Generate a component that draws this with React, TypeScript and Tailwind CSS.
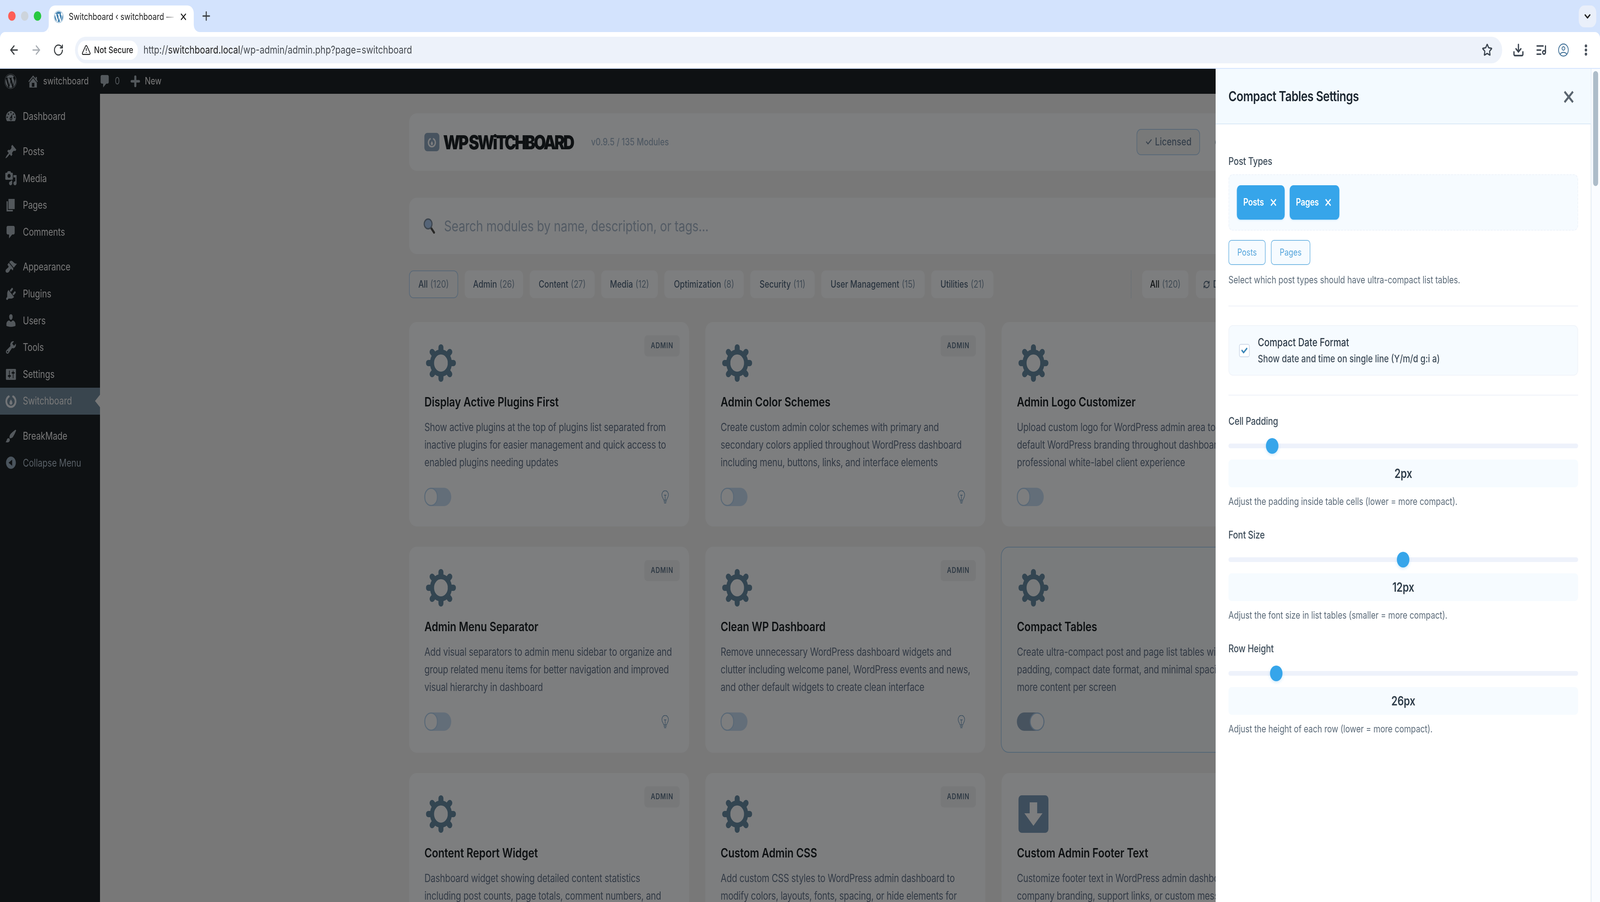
import React from "react";
import { ArrowLeft, ArrowRight, RotateCw, Star, Download, ListMusic, EllipsisVertical, ChevronDown, X, Plus, TriangleAlert, RefreshCw } from "lucide-react";
import { FaWordpress, FaCheck } from "react-icons/fa";

const DASH: Record<string, string> = {
  dashboard: "M3.76 16h12.48c1.1-1.37 1.76-3.11 1.76-5 0-4.42-3.58-8-8-8s-8 3.58-8 8c0 1.89.66 3.63 1.76 5zM10 4c.55 0 1 .45 1 1s-.45 1-1 1-1-.45-1-1 .45-1 1-1zM6 6c.55 0 1 .45 1 1s-.45 1-1 1-1-.45-1-1 .45-1 1-1zm8 0c.55 0 1 .45 1 1s-.45 1-1 1-1-.45-1-1 .45-1 1-1zm-5.37 5.55L12 7v6c0 1.1-.9 2-2 2s-2-.9-2-2c0-.57.24-1.08.63-1.45zM4 10c.55 0 1 .45 1 1s-.45 1-1 1-1-.45-1-1 .45-1 1-1zm12 0c.55 0 1 .45 1 1s-.45 1-1 1-1-.45-1-1 .45-1 1-1zm-5 3c0-.55-.45-1-1-1s-1 .45-1 1 .45 1 1 1 1-.45 1-1z",
  post: "M10.44 3.02l1.82-1.82 6.36 6.35-1.83 1.82c-1.05-.68-2.48-.57-3.41.36l-.75.75c-.92.93-1.04 2.35-.35 3.41l-1.83 1.82-2.41-2.41-2.8 2.79c-.42.42-3.38 2.71-3.8 2.29s1.86-3.39 2.28-3.81l2.79-2.79L4.1 9.36l1.83-1.82c1.05.69 2.48.57 3.4-.36l.75-.75c.93-.92 1.05-2.35.36-3.41z",
  media: "M13 11V4c0-.55-.45-1-1-1h-1.67L9 1H5L3.67 3H2c-.55 0-1 .45-1 1v7c0 .55.45 1 1 1h10c.55 0 1-.45 1-1zM7 4.5c1.38 0 2.5 1.12 2.5 2.5S8.38 9.5 7 9.5 4.5 8.38 4.5 7 5.62 4.5 7 4.5zM14 6h5v10.5c0 1.38-1.12 2.5-2.5 2.5S14 17.88 14 16.5s1.12-2.5 2.5-2.5c.17 0 .34.02.5.05V9h-3V6zm-4 8.05V13h2v3.5c0 1.38-1.12 2.5-2.5 2.5S7 17.88 7 16.5 8.12 14 9.5 14c.17 0 .34.02.5.05z",
  page: "M6 15V2h10v13H6zm-1 1h8v2H3V5h2v11z",
  comments: "M5 2h9c1.1 0 2 .9 2 2v7c0 1.1-.9 2-2 2h-2l-5 5v-5H5c-1.1 0-2-.9-2-2V4c0-1.1.9-2 2-2z",
  appearance: "M14.48 11.06L7.41 3.99l1.5-1.5c.5-.56 2.3-.47 3.51.32 1.21.8 1.43 1.28 2.91 2.1 1.18.64 2.45 1.26 4.45.85zm-.71.71L6.7 4.7 4.93 6.47c-.39.39-.39 1.02 0 1.41l1.06 1.06c.39.39.39 1.03 0 1.42-.6.6-1.43 1.11-2.21 1.69-.35.26-.7.53-1.01.84C1.43 13.23.93 15.6 2.09 16.76c1.17 1.17 3.53.67 4.87-.67.31-.31.58-.66.84-1.02.57-.78 1.08-1.61 1.69-2.21.39-.39 1.02-.39 1.41 0l1.06 1.06c.39.39 1.02.39 1.41 0z",
  plugin: "M13.11 4.36L9.87 7.6 8 5.73l3.24-3.24c.35-.34 1.05-.2 1.56.32.52.51.66 1.21.31 1.55zm-8 1.77l.91-1.12 9.01 9.01-1.19.84c-.71.71-2.63 1.16-3.82 1.16H6.14L4.9 17.26c-.59.59-1.54.59-2.12 0-.59-.58-.59-1.53 0-2.12l1.24-1.24v-3.88c0-1.13.4-3.19 1.09-3.89zm7.26 3.97l3.24-3.24c.34-.35 1.04-.21 1.55.31.52.51.66 1.21.31 1.55l-3.24 3.25z",
  users: "M10 9.25c-2.27 0-2.73-3.44-2.73-3.44C7 4.02 7.82 2 9.97 2c2.16 0 2.98 2.02 2.71 3.81 0 0-.41 3.44-2.68 3.44zm0 2.57L12.72 10c2.39 0 4.52 2.33 4.52 4.53v2.49s-3.65 1.13-7.24 1.13c-3.65 0-7.24-1.13-7.24-1.13v-2.49c0-2.25 1.94-4.48 4.47-4.48z",
  tools: "M16.68 9.77c-1.34 1.34-3.3 1.67-4.95.99l-5.41 6.52c-.99.99-2.59.99-3.58 0s-.99-2.59 0-3.57l6.52-5.42c-.68-1.65-.35-3.61.99-4.95 1.28-1.28 3.12-1.62 4.72-1.06l-2.89 2.89 2.82 2.82 2.86-2.87c.53 1.58.18 3.39-1.08 4.65zM3.81 16.21c.4.39 1.04.39 1.43 0 .4-.4.4-1.04 0-1.43-.39-.4-1.03-.4-1.43 0-.39.39-.39 1.03 0 1.43z",
  settings: "M18 16V4c0-.55-.45-1-1-1H3c-.55 0-1 .45-1 1v12c0 .55.45 1 1 1h14c.55 0 1-.45 1-1zM8 11h1c.55 0 1 .45 1 1s-.45 1-1 1H8v1.5c0 .28-.22.5-.5.5s-.5-.22-.5-.5V13H6c-.55 0-1-.45-1-1s.45-1 1-1h1V5.5c0-.28.22-.5.5-.5s.5.22.5.5V11zm5-2h-1c-.55 0-1-.45-1-1s.45-1 1-1h1V5.5c0-.28.22-.5.5-.5s.5.22.5.5V7h1c.55 0 1 .45 1 1s-.45 1-1 1h-1v5.5c0 .28-.22.5-.5.5s-.5-.22-.5-.5V9z",
  brush: "M18.33 3.57s.27-.8-.31-1.36c-.53-.52-1.22-.24-1.22-.24-.61.3-5.76 3.47-7.67 5.57-.86.96-2.06 3.79-1.09 4.82.92.98 3.96-.17 4.79-1 2.06-2.06 5.21-7.84 5.5-8.79zM1.4 17.65c2.37-1.56 1.46-3.41 3.23-4.64.93-.65 2.22-.62 3.08.29.63.67.8 2.57-.16 3.46-1.57 1.45-4 1.55-6.15.89z",
  collapse: "M10 2.16c4.33 0 7.84 3.51 7.84 7.84s-3.51 7.84-7.84 7.84S2.16 14.33 2.16 10 5.71 2.16 10 2.16zm2 11.72V6.12L6.18 9.97z",
  home: "M16 8.5l1.53 1.53-1.06 1.06L10 4.62l-6.47 6.47-1.06-1.06L10 2.5l4 4v-2h2v4zm-6-2.46l6 5.99V18H4v-5.97zM12 17v-5H8v5h4z",
};

function Dash({ name, className }: { name: string; className: string }) {
  return (
    <svg viewBox="0 0 20 20" className={className} fill="currentColor">
      <path d={DASH[name]} />
    </svg>
  );
}

function SwitchMark({ className, ring = "currentColor" }: { className: string; ring?: string }) {
  return (
    <svg viewBox="0 0 40 40" className={className} fill="none">
      <path d="M13 8.5A14 14 0 0 0 20 35a14 14 0 0 0 7-26.5" stroke={ring} strokeWidth="5.5" strokeLinecap="round" />
      <path d="M20 16c3 4 4.5 6 4.5 9a4.5 4.5 0 0 1-9 0c0-3 1.5-5 4.5-9z" fill={ring} />
    </svg>
  );
}

function Gear() {
  const angles = [0, 45, 90, 135, 180, 225, 270, 315];
  return (
    <svg viewBox="0 0 96 96" className="h-[96px] w-[96px] text-[#668aa2]" fill="none" stroke="currentColor">
      <circle cx="48" cy="48" r="28.5" strokeWidth="13" />
      {angles.map((a) => (
        <line key={a} x1="48" y1="18" x2="48" y2="8" strokeWidth="16" strokeLinecap="round" transform={`rotate(${a} 48 48)`} />
      ))}
    </svg>
  );
}

function DownloadBox() {
  return (
    <svg viewBox="0 0 96 96" className="h-[96px] w-[96px]">
      <rect width="96" height="96" rx="10" fill="#7b9ab8" />
      <path d="M36 18h24v28h17L48 78 19 46h17z" fill="#fbfcfe" />
    </svg>
  );
}

function Bulb() {
  return (
    <svg viewBox="0 0 25 34" className="h-[34px] w-[25px]" fill="none" stroke="#7ea4c4" strokeWidth="1.8" strokeLinecap="round" strokeLinejoin="round">
      <path d="M8 25c0-4-6-7-6-14a10.500 10.500 0 0 1 21 0c0 7-6 10-6 14z" />
      <path d="M9.500 12h6M12.500 12v13M8.500 28.500h8M10 32h5" />
    </svg>
  );
}

type CardData = { title: string; lines: string[]; icon?: "gear" | "download"; on?: boolean; active?: boolean };

function Toggle({ on }: { on?: boolean }) {
  return on ? (
    <div className="flex h-[47px] w-[88px] justify-end rounded-full bg-[#8ea6bf]">
      <div className="h-[47px] w-[47px] rounded-full border-[3px] border-[#a9c8e6] bg-[#fbfcfe]" />
    </div>
  ) : (
    <div className="flex h-[47px] w-[86px] justify-start rounded-full bg-[#c6dcf2]">
      <div className="h-[47px] w-[43px] rounded-full border-[3px] border-[#b5d2ee] bg-[#fbfcfe]" />
    </div>
  );
}

function Card({ title, lines, icon = "gear", on, active, h, col }: CardData & { h: string; col: number }) {
  return (
    <div className={`relative flex flex-col rounded-[24px] pr-[64px] ${h} ${active ? "-ml-[2px] border-2 border-[#a6cdec] bg-[#f3f6f8] pl-[49px] pt-[55px]" : "bg-[#fbfcfe] pl-[49px] pt-[57px]"}`}>
      <div className="ml-[5px] h-[96px] w-[96px]">{icon === "gear" ? <Gear /> : <DownloadBox />}</div>
      <div className="mt-[29px] whitespace-nowrap text-[33px] font-semibold leading-[44px] tracking-[-0.003em] text-[#1d2327]">{title}</div>
      <div className="mt-[21px] text-[28px] leading-[45px] tracking-[-0.0115em] text-[#64748b]">
        {lines.map((l) => (
          <div key={l} className="whitespace-nowrap">{l}</div>
        ))}
      </div>
      <div className="mt-[42px] flex items-center justify-between">
        <Toggle on={on} />
        <Bulb />
      </div>
      {col < 2 && (
        <div className="absolute right-[30px] top-[34px] flex h-[54px] w-[113px] items-center justify-center rounded-[10px] bg-[#eef0f2] text-[19.500px] font-semibold tracking-[0.06em] text-[#5d7388]">ADMIN</div>
      )}
    </div>
  );
}

const rows: CardData[][] = [
  [
    { title: "Display Active Plugins First", lines: ["Show active plugins at the top of plugins list separated from", "inactive plugins for easier management and quick access to", "enabled plugins needing updates"] },
    { title: "Admin Color Schemes", lines: ["Create custom admin color schemes with primary and", "secondary colors applied throughout WordPress dashboard", "including menu, buttons, links, and interface elements"] },
    { title: "Admin Logo Customizer", lines: ["Upload custom logo for WordPress admin area to", "default WordPress branding throughout dashboard", "professional white-label client experience"] },
  ],
  [
    { title: "Admin Menu Separator", lines: ["Add visual separators to admin menu sidebar to organize and", "group related menu items for better navigation and improved", "visual hierarchy in dashboard"] },
    { title: "Clean WP Dashboard", lines: ["Remove unnecessary WordPress dashboard widgets and", "clutter including welcome panel, WordPress events and news,", "and other default widgets to create clean interface"] },
    { title: "Compact Tables", on: true, active: true, lines: ["Create ultra-compact post and page list tables with", "padding, compact date format, and minimal spacing", "more content per screen"] },
  ],
  [
    { title: "Content Report Widget", lines: ["Dashboard widget showing detailed content statistics", "including post counts, page totals, comment numbers, and"] },
    { title: "Custom Admin CSS", lines: ["Add custom CSS styles to WordPress admin dashboard to", "modify colors, layouts, fonts, spacing, or hide elements for"] },
    { title: "Custom Admin Footer Text", icon: "download", lines: ["Customize footer text in WordPress admin dashboard", "company branding, support links, or custom messages"] },
  ],
];

const navGroups: { label: string; icon: string; active?: boolean; dim?: boolean }[][] = [
  [{ label: "Dashboard", icon: "dashboard" }],
  [
    { label: "Posts", icon: "post" },
    { label: "Media", icon: "media" },
    { label: "Pages", icon: "page" },
    { label: "Comments", icon: "comments" },
  ],
  [
    { label: "Appearance", icon: "appearance" },
    { label: "Plugins", icon: "plugin" },
    { label: "Users", icon: "users" },
    { label: "Tools", icon: "tools" },
    { label: "Settings", icon: "settings" },
    { label: "Switchboard", icon: "switch", active: true },
  ],
  [
    { label: "BreakMade", icon: "brush" },
    { label: "Collapse Menu", icon: "collapse", dim: true },
  ],
];

function Sidebar() {
  return (
    <div className="flex w-[320px] shrink-0 flex-col gap-[21px] bg-[#1d2327] pt-[24px] text-[26.500px] text-[#f0f0f1]">
      {navGroups.map((g, i) => (
        <div key={i}>
          {g.map((it) => (
            <div key={it.label} className={`relative flex h-[68.600px] items-center gap-[18px] pl-[15px] ${it.active ? "bg-[#728a9d]" : ""} ${it.dim ? "text-[#aebdca]" : ""}`}>
              {it.icon === "switch" ? (
                <SwitchMark className="h-[40px] w-[40px] text-[#e4e9ee]" />
              ) : (
                <Dash name={it.icon} className={`h-[40px] w-[40px] ${it.dim ? "text-[#94a9bb]" : "text-[#a7b0b8]"}`} />
              )}
              <span>{it.label}</span>
              {it.active && <div className="absolute right-0 top-[18px] h-0 w-0 border-y-[16px] border-r-[16px] border-y-transparent border-r-[#f0f0f1]" />}
            </div>
          ))}
        </div>
      ))}
    </div>
  );
}

function AdminBar() {
  return (
    <div className="flex h-[64px] shrink-0 items-center bg-[#1d2327] pl-[14px] text-[25px] text-[#f0f0f1]">
      <FaWordpress className="h-[40px] w-[40px] text-[#a7b0b8]" />
      <Dash name="home" className="ml-[32px] h-[40px] w-[40px] text-[#a7b0b8]" />
      <span className="ml-[12px]">switchboard</span>
      <Dash name="comments" className="ml-[32px] h-[40px] w-[40px] text-[#a7b0b8]" />
      <span className="ml-[12px] text-[#a7b0b8]">0</span>
      <Plus className="ml-[30px] h-[40px] w-[40px] text-[#a7b0b8]" strokeWidth={4} />
      <span className="ml-[10px]">New</span>
    </div>
  );
}

function FilterPill({ name, count, w, active, strong }: { name: string; count: string; w: string; active?: boolean; strong?: boolean }) {
  return (
    <div className={`flex h-[71px] items-center justify-center gap-[8px] whitespace-nowrap rounded-[14px] text-[25px] font-medium ${w} ${active ? "border-2 border-[#b0d0ee] bg-[#f4f6f8]" : "bg-[#fbfcfe]"} ${strong ? "text-[#1d2327]" : "text-[#53687e]"}`}>
      <span>{name}</span>
      <span className="font-normal text-[#8095a9]">{count}</span>
    </div>
  );
}

function Main() {
  return (
    <div className="w-[4800px] pl-[989px] pt-[50px]">
      <div className="w-[3740px]">
        <div className="flex h-[147px] items-center rounded-[24px] bg-[#fbfcfe] pl-[49px] pr-[1040px]">
          <div className="flex h-[47px] w-[48px] items-center justify-center rounded-[9px] bg-[#8ea6be]">
            <SwitchMark className="h-[30px] w-[30px] text-[#fbfcfe]" />
          </div>
          <span className="ml-[12px] whitespace-nowrap text-[50px] font-black leading-none tracking-[-0.1em] text-[#1d2327]">WP SWiTCHBOARD</span>
          <span className="ml-[58px] whitespace-nowrap text-[25px] font-medium text-[#9fb2c7]">v0.9.5 / 135 Modules</span>
          <div className="ml-auto flex h-[67px] w-[203px] items-center justify-center gap-[8px] rounded-[14px] border-2 border-[#b0d0ee] bg-[#f0f2f3] text-[27px] font-medium text-[#6c8097]">
            <span>✓</span>
            <span>Licensed</span>
          </div>
          <div className="ml-[18px] flex h-[67px] w-[151px] items-center rounded-[14px] bg-[#fbfcfe] pl-[27px]">
            <svg viewBox="0 0 96 96" className="h-[30px] w-[30px] text-[#5e7a92]" fill="none" stroke="currentColor"><circle cx="48" cy="48" r="28" strokeWidth="18" /></svg>
          </div>
        </div>
        <div className="mt-[69px] flex h-[144px] items-center rounded-[24px] bg-[#fbfcfe] pl-[44px]">
          <svg viewBox="0 0 42 40" className="h-[40px] w-[42px]">
            <path d="M27 26l9 11" stroke="#50504f" strokeWidth="6" strokeLinecap="round" />
            <circle cx="17" cy="15" r="12.500" fill="#aac9ee" stroke="#7a8b9c" strokeWidth="3.500" />
          </svg>
          <span className="ml-[26px] text-[38px] font-normal tracking-[-0.006em] text-[#a6b6c9]">Search modules by name, description, or tags...</span>
        </div>
        <div className="mt-[42px] flex h-[71px] items-center gap-[21px]">
          <FilterPill name="All" count="(120)" w="w-[157px]" active />
          <FilterPill name="Admin" count="(26)" w="w-[187px]" />
          <FilterPill name="Content" count="(27)" w="w-[208px]" />
          <FilterPill name="Media" count="(12)" w="w-[181px]" />
          <FilterPill name="Optimization" count="(8)" w="w-[254px]" />
          <FilterPill name="Security" count="(11)" w="w-[206px]" />
          <FilterPill name="User Management" count="(15)" w="w-[331px]" />
          <FilterPill name="Utilities" count="(21)" w="w-[199px]" />
          <div className="ml-[419px] flex h-[71px] items-center gap-[24px] border-l border-dotted border-[#9dc0e0] pl-[35px]">
            <FilterPill name="All" count="(120)" w="w-[148px]" strong />
            <div className="flex h-[71px] w-[230px] items-center gap-[10px] rounded-[14px] bg-[#fbfcfe] pl-[23px] text-[25px] font-medium text-[#53687e]">
              <RefreshCw className="h-[22px] w-[22px]" strokeWidth={2.500} />
              <span>D</span>
            </div>
          </div>
        </div>
        <div className="mt-[61px] grid grid-cols-[896px_896px_896px_896px] gap-[52px]">
          {rows.map((r, ri) => (
            <React.Fragment key={ri}>
              {r.map((c, ci) => (
                <Card key={c.title} {...c} col={ci} h={ri === 1 ? "h-[527px]" : "h-[523px]"} />
              ))}
              <div />
            </React.Fragment>
          ))}
        </div>
      </div>
    </div>
  );
}

function SliderBlock({ label, value, help, thumb, first }: { label: string; value: string; help: string; thumb: number; first?: boolean }) {
  return (
    <div className={first ? "mt-[48px]" : "mt-[50px]"}>
      <div className="text-[27px] font-medium leading-[36px] tracking-[-0.01em] text-[#3f4e5b]">{label}</div>
      <div className="relative mt-[25px] flex h-[40px] items-center">
        <div className="h-[12px] w-full rounded-full bg-[#eef2fb]" />
        <div className="absolute top-0 h-[40px] w-[40px] rounded-full bg-[#36a5ea] shadow-[0_3px_8px_rgba(54,165,234,0.25)]" style={{ left: thumb }} />
      </div>
      <div className="mt-[15px] flex h-[71px] items-center justify-center rounded-[10px] bg-[#f6fbff] text-[32px] font-semibold tracking-[-0.01em] text-[#2f3d4a]">{value}</div>
      <div className="mt-[18px] text-[25.500px] leading-[36px] tracking-[-0.004em] text-[#5f6e7c]">{help}</div>
    </div>
  );
}

function Panel() {
  return (
    <div className="absolute bottom-0 right-0 top-0 z-20 flex w-[1230px]">
      <div className="flex w-[1201px] flex-col bg-white">
        <div className="flex h-[142px] shrink-0 items-center justify-between border-b-2 border-[#d9e8f6] bg-[#f3faff] pl-[41px] pr-[44px]">
          <span className="text-[36px] font-semibold tracking-[-0.02em] text-[#1d2731]">Compact Tables Settings</span>
          <X className="mt-[4px] h-[54px] w-[54px] text-[#5a6570]" strokeWidth={2.600} strokeLinecap="butt" />
        </div>
        <div className="flex-1 px-[41px] pt-[77px]">
          <div className="text-[27px] font-medium leading-[36px] tracking-[-0.01em] text-[#3f4e5b]">Post Types</div>
          <div className="mt-[15px] flex h-[144px] items-center gap-[16px] rounded-[14px] border-2 border-dashed border-[#eef3fa] bg-[#f6fbff] pl-[25px]">
            {[["Posts", "w-[153px]"], ["Pages", "w-[159px]"]].map(([t, w]) => (
              <div key={t} className={`flex h-[88px] items-center justify-center gap-[14px] rounded-[12px] bg-[#36a5ea] text-[25px] font-semibold tracking-[-0.01em] text-white shadow-[0_2px_4px_rgba(54,165,234,0.2)] ${w}`}>
                <span>{t}</span>
                <X className="h-[32px] w-[32px]" strokeWidth={2.400} strokeLinecap="butt" />
              </div>
            ))}
          </div>
          <div className="mt-[24px] flex gap-[17px]">
            {[["Posts", "w-[119px]"], ["Pages", "w-[126px]"]].map(([t, w]) => (
              <div key={t} className={`flex h-[64px] items-center justify-center rounded-[10px] border-2 border-[#76b8e4] bg-[#f6fbff] text-[24px] text-[#57a6dc] ${w}`}>{t}</div>
            ))}
          </div>
          <div className="mt-[20px] text-[25.500px] leading-[36px] tracking-[-0.004em] text-[#5f6e7c]">Select which post types should have ultra-compact list tables.</div>
          <div className="mt-[48px] h-[2px] bg-[#eef1f8]" />
          <div className="mt-[48px] flex h-[129px] items-center gap-[26px] rounded-[14px] border-2 border-[#f0f4fa] bg-[#f6fbff] pl-[32px]">
            <div className="flex h-[34px] w-[34px] items-center justify-center rounded-[6px] border-2 border-[#cdd8e8] bg-white">
              <FaCheck className="h-[20px] w-[20px] text-[#3a86b8]" />
            </div>
            <div>
              <div className="text-[28px] font-medium leading-[41px] text-[#2e3b48]">Compact Date Format</div>
              <div className="text-[26.250px] font-medium leading-[41px] text-[#3f4d5a]">Show date and time on single line (Y/m/d g:i a)</div>
            </div>
          </div>
          <div className="mt-[49px] h-[2px] bg-[#eef1f8]" />
          <SliderBlock first label="Cell Padding" value="2px" help="Adjust the padding inside table cells (lower = more compact)." thumb={120} />
          <SliderBlock label="Font Size" value="12px" help="Adjust the font size in list tables (smaller = more compact)." thumb={539} />
          <SliderBlock label="Row Height" value="26px" help="Adjust the height of each row (lower = more compact)." thumb={133} />
        </div>
      </div>
      <div className="w-[29px] border-l-2 border-[#e6f0fb] bg-[#fafcff] pl-[5px] pt-[6px]">
        <div className="h-[294px] w-[16px] rounded-full bg-[#adbcc9]" />
      </div>
    </div>
  );
}

function Chrome() {
  return (
    <div className="shrink-0 bg-[#d3e3fd]">
      <div className="flex h-[82px] items-start pl-[26px] pr-[12px]">
        <div className="mt-[29px] flex gap-[17px]">
          <div className="h-[24px] w-[24px] rounded-full bg-[#ff5f57]" />
          <div className="h-[24px] w-[24px] rounded-full bg-[#cdd4dc]" />
          <div className="h-[24px] w-[24px] rounded-full bg-[#28c840]" />
        </div>
        <div className="relative ml-[24px] mt-[14px] flex h-[68px] w-[464px] items-start rounded-t-[20px] bg-white pl-[16px] pt-[13px]">
          <svg viewBox="0 0 20 20" className="absolute -left-[20px] bottom-0 h-[20px] w-[20px]"><path d="M20 0v20H0C12 20 20 12 20 0z" fill="#fff" /></svg>
          <svg viewBox="0 0 20 20" className="absolute -right-[20px] bottom-0 h-[20px] w-[20px]"><path d="M0 0v20h20C8 20 0 12 0 0z" fill="#fff" /></svg>
          <FaWordpress className="h-[32px] w-[32px] text-[#3f7fae]" />
          <span className="ml-[16px] w-[343px] overflow-hidden whitespace-nowrap text-[24px] leading-[32px] text-[#1f1f1f] [mask-image:linear-gradient(to_right,black_88%,transparent)]">Switchboard ‹ switchboard —</span>
          <X className="ml-[10px] mt-[2px] h-[28px] w-[28px] text-[#1f1f1f]" strokeWidth={2.500} />
        </div>
        <Plus className="ml-[22px] mt-[23px] h-[36px] w-[36px] text-[#3c4043]" strokeWidth={2.200} />
        <div className="ml-auto mt-[14px] flex h-[56px] w-[56px] items-center justify-center rounded-[18px] bg-[#e9effa]">
          <ChevronDown className="h-[30px] w-[30px] text-[#1f1f1f]" strokeWidth={3} />
        </div>
      </div>
      <div className="flex h-[92px] items-center rounded-t-[16px] bg-white pl-[27px]">
        <ArrowLeft className="h-[36px] w-[36px] text-[#3c4043]" strokeWidth={2.200} />
        <ArrowRight className="ml-[35px] h-[36px] w-[36px] text-[#a9aeb4]" strokeWidth={2.200} />
        <RotateCw className="ml-[36px] h-[34px] w-[34px] text-[#3c4043]" strokeWidth={2.200} />
        <div className="ml-[36px] flex h-[68px] w-[4567px] shrink-0 items-center rounded-full bg-[#edf2fa] pl-[9px]">
          <div className="flex h-[49px] w-[192px] items-center gap-[10px] rounded-full bg-white pl-[12px] text-[23.500px] font-medium text-[#1f1f1f]">
            <TriangleAlert className="h-[30px] w-[30px]" strokeWidth={2} />
            <span className="whitespace-nowrap">Not Secure</span>
          </div>
          <div className="ml-[18px] whitespace-nowrap text-[27.700px] text-[#474c52]">
            http://<span className="text-[#1f1f1f]">switchboard.local</span>/wp-admin/admin.php?page=switchboard
          </div>
          <Star className="ml-auto mr-[31px] h-[34px] w-[34px] text-[#3c4550]" strokeWidth={2.500} />
        </div>
        <Download className="ml-[33px] h-[38px] w-[38px] text-[#3c4550]" strokeWidth={2.500} />
        <ListMusic className="ml-[36px] h-[36px] w-[36px] text-[#3c4550]" strokeWidth={2.500} />
        <svg viewBox="0 0 36 36" className="ml-[35px] h-[36px] w-[36px]" fill="none" stroke="#46749a" strokeWidth="2.500">
          <circle cx="18" cy="18" r="15.500" />
          <circle cx="18" cy="14" r="4.500" />
          <path d="M7 29c3-4 7-5 11-5s8 1 11 5" />
        </svg>
        <EllipsisVertical className="ml-[36px] h-[36px] w-[36px] text-[#3c4550]" strokeWidth={3} />
      </div>
      <div className="h-[2px] bg-[#d3e3fd]" />
    </div>
  );
}

export default function App() {
  // The reference is 5120 wide; the layout stays on those coordinates. If the window is
  // narrower (the sandbox reports 4096), squeeze horizontally so all of it stays in frame.
  const sx = Math.min(1, window.innerWidth / 5120);
  return (
    <div className="h-[2308px] w-full overflow-hidden">
      <div className="flex h-[2308px] w-[5120px] origin-top-left flex-col overflow-hidden bg-[#f0f0f1] font-['Inter','Noto_Sans',sans-serif]" style={{ transform: `scaleX(${sx})` }}>
        <Chrome />
        <div className="relative flex min-h-0 flex-1 flex-col overflow-hidden">
          <AdminBar />
          <div className="flex min-h-0 flex-1">
            <Sidebar />
            <Main />
          </div>
          <div className="absolute inset-0 z-10 bg-black/50" />
          <Panel />
        </div>
      </div>
    </div>
  );
}
